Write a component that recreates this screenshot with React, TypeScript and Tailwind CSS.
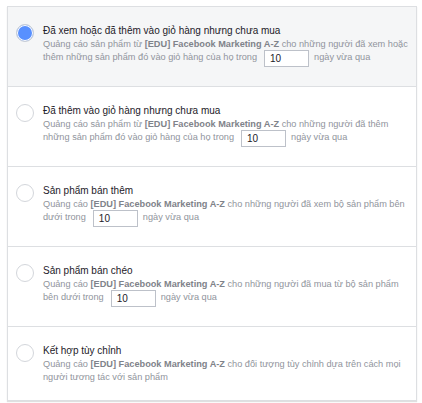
const EDU = "[EDU] Facebook Marketing A-Z";

const rows = [
  {
    title: "Đã xem hoặc đã thêm vào giỏ hàng nhưng chưa mua",
    before: "Quảng cáo sản phẩm từ ",
    after: " cho những người đã xem hoặc",
    line2: "thêm những sản phẩm đó vào giỏ hàng của họ trong",
    input: true,
    selected: true,
  },
  {
    title: "Đã thêm vào giỏ hàng nhưng chưa mua",
    before: "Quảng cáo sản phẩm từ ",
    after: " cho những người đã thêm",
    line2: "những sản phẩm đó vào giỏ hàng của họ trong",
    input: true,
  },
  {
    title: "Sản phẩm bán thêm",
    before: "Quảng cáo ",
    after: " cho những người đã xem bộ sản phẩm bên",
    line2: "dưới trong",
    input: true,
  },
  {
    title: "Sản phẩm bán chéo",
    before: "Quảng cáo ",
    after: " cho những người đã mua từ bộ sản phẩm",
    line2: "bên dưới trong",
    input: true,
  },
  {
    title: "Kết hợp tùy chỉnh",
    before: "Quảng cáo ",
    after: " cho đối tượng tùy chỉnh dựa trên cách mọi",
    line2: "người tương tác với sản phẩm",
    input: false,
  },
];

export default function App() {
  return (
    <div className="w-[422px] h-[403px] bg-white pt-[6px] pl-[7px] font-['Liberation_Sans',Arial,sans-serif]">
      <div className="w-[410px] border border-[#dddfe2] shadow-[0_1px_1px_rgba(0,0,0,0.12)]">
        {rows.map((r, i) => (
          <div
            key={i}
            className={`flex pl-[8px] pt-[17px] ${i < rows.length - 1 ? "h-[80px] border-b border-[#dddfe2]" : "h-[73px]"} ${r.selected ? "bg-[#f5f6f7]" : "bg-white"}`}
          >
            {r.selected ? (
              <div className="w-[18px] h-[18px] shrink-0 rounded-full border border-[#ccd0d5] bg-[#5890ff] shadow-[inset_0_0_0_1px_#fff]" />
            ) : (
              <div className="w-[18px] h-[18px] shrink-0 rounded-full border-[1.5px] border-[#d3d6db] bg-white" />
            )}
            <div className="ml-[9px] whitespace-nowrap">
              <div className="text-[10px] leading-[13px] text-[#1d2129]">{r.title}</div>
              <div className="text-[9.2px] leading-[14px] text-[#90949c]">
                {r.before}
                <span className="font-bold text-[#7f838a]">{EDU}</span>
                {r.after}
              </div>
              <div className="flex items-center h-[14px] text-[9.2px] text-[#90949c]">
                <span>{r.line2}</span>
                {r.input && (
                  <>
                    <div className="shrink-0 ml-[7px] mr-[5px] w-[45px] h-[17px] border border-[#bdc1c9] bg-white text-[#1d2129] text-[10px] leading-[15px] pl-[5px]">
                      10
                    </div>
                    <span>ngày vừa qua</span>
                  </>
                )}
              </div>
            </div>
          </div>
        ))}
      </div>
    </div>
  );
}
